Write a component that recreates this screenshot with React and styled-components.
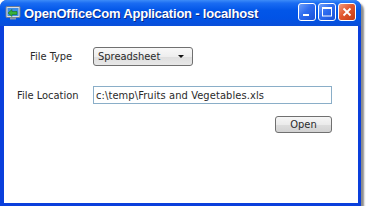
import React from 'react'
import styled, { createGlobalStyle } from 'styled-components'

const Global = createGlobalStyle`
    html, body {
        margin: 0;
        padding: 0;
        background: #fff;
    }
`

const Window = styled.div`
    width: 361px;
    height: 206px;
    display: flex;
    flex-direction: column;
    border-radius: 7px 7px 0 0;
    box-shadow: 3px 3px 2px rgba(0, 0, 0, 0.45);
    overflow: hidden;
    background: #0a3fdc;
`

const TitleBar = styled.div`
    height: 26px;
    flex: none;
    display: flex;
    align-items: center;
    padding: 0 5px 0 5px;
    background: linear-gradient(
        to bottom,
        #3d8cf8 0%,
        #1a6cf2 12%,
        #0256e8 40%,
        #0153e6 70%,
        #0a4fd8 100%
    );
`

const Title = styled.span`
    flex: 1;
    margin-left: 3px;
    color: #fff;
    font: bold 13px "Liberation Sans", Arial, sans-serif;
    letter-spacing: -0.2px;
    text-shadow: 1px 1px 0 #0a2a88;
    white-space: nowrap;
`

const Controls = styled.div`
    display: flex;
    gap: 2px;
    margin-top: -2px;
`

const Caption = styled.div`
    width: 18px;
    height: 18px;
    box-sizing: border-box;
    border: 1px solid #fff;
    border-radius: 3px;
    display: flex;
    align-items: center;
    justify-content: center;
    background: ${ ({ close }) => close
        ? 'linear-gradient(135deg, #f19a7c 0%, #e2582f 45%, #c43a12 100%)'
        : 'linear-gradient(135deg, #6f9ff9 0%, #2e6cf0 45%, #1a4fd6 100%)' };
`

const Client = styled.div`
    flex: 1;
    margin: 0 3px 3px 4px;
    background: #fff;
    padding: 21px 0 0 12px;
    font: 11px "DejaVu Sans Condensed", "DejaVu Sans", Tahoma, sans-serif;
    color: #2a2a2a;
`

const Form = styled.div`
    display: grid;
    grid-template-columns: 72px 239px;
    column-gap: 5px;
    row-gap: 20px;
    align-items: center;
`

const Label = styled.label`
    justify-self: start;
    white-space: nowrap;
    margin-left: ${ ({ indent }) => indent || 0 }px;
`

const Select = styled.div`
    width: 100px;
    height: 19px;
    box-sizing: border-box;
    border: 1px solid #707070;
    border-radius: 3px;
    background: linear-gradient(to bottom, #f8f8f8 0%, #eeeeee 50%, #dedede 51%, #e8e8e8 100%);
    display: flex;
    align-items: center;
    justify-content: space-between;
    padding: 0 8px 0 4px;
`

const Arrow = styled.span`
    width: 0;
    height: 0;
    border-left: 3px solid transparent;
    border-right: 3px solid transparent;
    border-top: 3px solid #111;
`

const Input = styled.div`
    height: 18px;
    box-sizing: border-box;
    border: 1px solid #8aaec8;
    display: flex;
    align-items: center;
    padding-left: 2px;
    white-space: nowrap;
    letter-spacing: 0.1px;
`

const Actions = styled.div`
    grid-column: 2;
    display: flex;
    justify-content: flex-end;
    margin-top: -8px;
`

const Button = styled.div`
    width: 57px;
    height: 17px;
    box-sizing: border-box;
    border: 1px solid #707070;
    border-radius: 3px;
    background: linear-gradient(to bottom, #f6f6f6 0%, #ebebeb 50%, #dddddd 51%, #d2d2d2 100%);
    display: flex;
    align-items: center;
    justify-content: center;
`

const AppIcon = () => (
    <svg width="16" height="16" viewBox="0 0 16 16">
        <rect x="1" y="1.5" width="14" height="11" rx="1" fill="#d8dde6" stroke="#6b7a8f" />
        <rect x="2.5" y="3" width="11" height="8" fill="#3a8ee8" />
        <rect x="5" y="12.5" width="6" height="2" fill="#8a96a8" />
        <path d="M3 8 L7 4.5 L7 6.5 L12 6.5 L12 9.5 L7 9.5 L7 11.5 Z" fill="#36b03a" stroke="#1c6e1f" strokeWidth="0.6" />
    </svg>
)

export default function App() {
    return (
        <>
            <Global />
            <Window>
                <TitleBar>
                    <AppIcon />
                    <Title>OpenOfficeCom Application - localhost</Title>
                    <Controls>
                        <Caption>
                            <svg width="12" height="12" viewBox="0 0 12 12">
                                <rect x="2" y="8" width="6" height="2" fill="#fff" />
                            </svg>
                        </Caption>
                        <Caption>
                            <svg width="12" height="12" viewBox="0 0 12 12">
                                <rect x="1.5" y="1.5" width="9" height="8.5" fill="none" stroke="#fff" />
                                <rect x="1" y="1" width="10" height="2" fill="#fff" />
                            </svg>
                        </Caption>
                        <Caption close>
                            <svg width="12" height="12" viewBox="0 0 12 12">
                                <path d="M2.5 2.5 L9.5 9.5 M9.5 2.5 L2.5 9.5" stroke="#fff" strokeWidth="1.8" />
                            </svg>
                        </Caption>
                    </Controls>
                </TitleBar>
                <Client>
                    <Form>
                        <Label indent={ 14 }>File Type</Label>
                        <Select>
                            <span>Spreadsheet</span>
                            <Arrow />
                        </Select>
                        <Label indent={ 1 }>File Location</Label>
                        <Input>c:\temp\Fruits and Vegetables.xls</Input>
                        <Actions>
                            <Button>Open</Button>
                        </Actions>
                    </Form>
                </Client>
            </Window>
        </>
    )
}
